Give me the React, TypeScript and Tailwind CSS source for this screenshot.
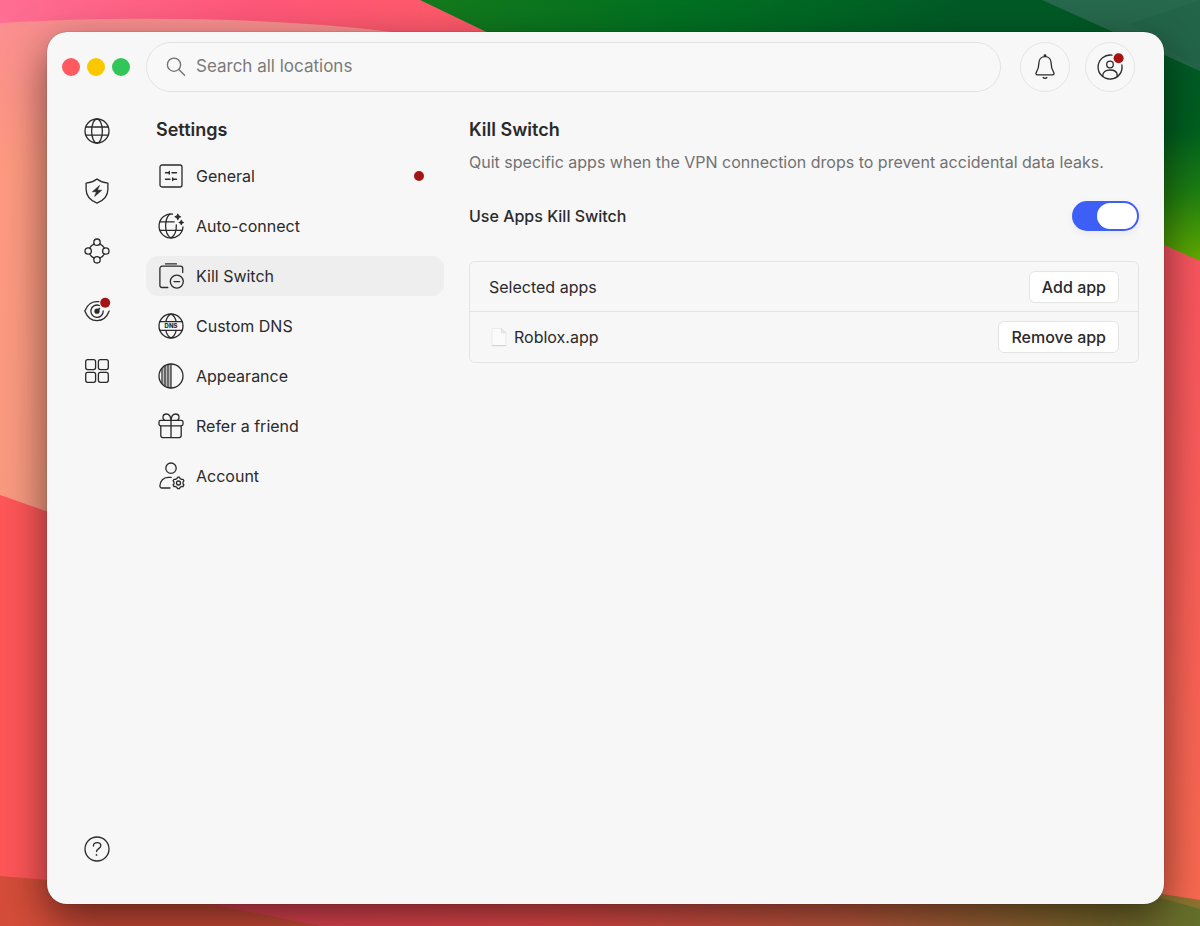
import React, { useState } from "react";

type IconProps = { children: React.ReactNode };

function Icon({ children }: IconProps) {
  return (
    <svg
      viewBox="0 0 26 26"
      className="size-[26px] shrink-0 overflow-visible"
      fill="none"
      stroke="currentColor"
      strokeWidth="1.3"
      strokeLinecap="round"
      strokeLinejoin="round"
      aria-hidden="true"
    >
      {children}
    </svg>
  );
}

const GlobeIcon = () => (
  <Icon>
    <circle cx="13" cy="13" r="12" />
    <ellipse cx="13" cy="13" rx="5.4" ry="12" />
    <path d="M2 9h22M2 17.2h22" />
  </Icon>
);

const ShieldIcon = () => (
  <Icon>
    <path d="M13 .9c3.2 2.500 6.800 3.800 10.900 4.200v6.200c0 6.500-4.200 11.200-10.900 13.800C6.300 22.500 2.100 17.800 2.100 11.300V5.100C6.200 4.700 9.800 3.400 13 .9Z" />
    <path d="M15.300 7.700 8.500 13.700h4l-1.800 4.700 6.900-6.100h-4.100Z" fill="currentColor" stroke="currentColor" strokeWidth=".7" />
  </Icon>
);

const MeshIcon = () => (
  <Icon>
    <circle cx="13" cy="4.200" r="3.200" />
    <circle cx="13" cy="21.800" r="3.200" />
    <circle cx="4.200" cy="13" r="3.200" />
    <circle cx="21.800" cy="13" r="3.200" />
    <path d="M10.200 5.800Q7 7.200 5.700 10.100M15.800 5.800Q19 7.200 20.300 10.100M5.700 15.900Q7 18.800 10.200 20.200M20.300 15.900Q19 18.800 15.800 20.200" />
  </Icon>
);

const EyeIcon = () => (
  <Icon>
    <path d="M14.800 3.700C8.500 2.700 3.300 6.500.8 13c2.600 6.600 7 9.700 12.200 9.700 5.200 0 9.900-3.500 12.200-9.600" />
    <path d="M15.400 7.500A6.200 6.200 0 1 0 19.200 13" />
    <circle cx="13" cy="13.200" r="2.600" fill="currentColor" stroke="none" />
    <path d="m13.500 12.700 2-2.200" strokeWidth="1.600" />
    <circle cx="21.200" cy="4.800" r="5" fill="#a31515" stroke="none" />
  </Icon>
);

const AppsIcon = () => (
  <Icon>
    <rect x="1.700" y="1.700" width="9.900" height="9.900" rx="2" />
    <rect x="14.400" y="1.700" width="9.900" height="9.900" rx="2" />
    <rect x="1.700" y="14.400" width="9.900" height="9.900" rx="2" />
    <rect x="14.400" y="14.400" width="9.900" height="9.900" rx="2" />
  </Icon>
);

const HelpIcon = () => (
  <Icon>
    <circle cx="13" cy="13" r="12" />
    <path d="M9.400 10c0-2.100 1.500-3.300 3.700-3.300s3.700 1.200 3.700 3.100c0 2.900-4.300 2.700-4.300 5.700" />
    <circle cx="12.500" cy="18.900" r=".9" fill="currentColor" stroke="none" />
  </Icon>
);

const SlidersIcon = () => (
  <Icon>
    <rect x="2" y="2" width="22" height="22" rx="2" />
    <path d="M7.500 9.800h3.800M11.300 8.500v2.600M14 9.800h4.500M7.500 16.200h4.500M14.700 14.900v2.600M14.700 16.200h3.800" strokeWidth="1.400" />
  </Icon>
);

const AutoConnectIcon = () => (
  <Icon>
    <path d="M14.500 1.100A12 12 0 1 0 25 14" />
    <path d="M11.500 1.300C9 3.800 7.600 8 7.600 13c0 5.500 2.100 10 5.400 12 3.600-2.200 5.600-7.300 5.300-13.200M2.200 8.800h14M2.200 17.400h21.700" />
    <path d="M19.800 1c.4 1.900.9 2.400 2.800 2.800-1.900.4-2.400.9-2.800 2.800-.4-1.900-.9-2.400-2.800-2.800 1.900-.4 2.400-.9 2.800-2.800ZM23.300 7.300c.3 1.500.7 1.900 2.200 2.200-1.500.3-1.900.7-2.200 2.200-.3-1.500-.7-1.900-2.200-2.200 1.500-.3 1.900-.7 2.200-2.200Z" fill="currentColor" strokeWidth="1.100" />
  </Icon>
);

const KillSwitchIcon = () => (
  <Icon>
    <path d="M7.500.9h11M9.800 24.500H4A2.200 2.200 0 0 1 1.900 22.300V5.400A2.200 2.200 0 0 1 4.100 3.200h18.400a2.200 2.200 0 0 1 2.200 2.200v4" />
    <circle cx="18.800" cy="18.600" r="6.500" />
    <path d="M16 18.600h5.600" />
  </Icon>
);

const DnsIcon = () => (
  <Icon>
    <circle cx="13" cy="13" r="12" />
    <path d="M2 8.600h22M2 17.400h22M7.800 8.600C8.500 5.400 10.200 2.400 13 1c2.800 1.400 4.500 4.400 5.200 7.600M7.800 17.400c.7 3.200 2.400 6.200 5.200 7.600 2.800-1.400 4.500-4.400 5.200-7.600" />
    <text x="13" y="15.100" textAnchor="middle" fontSize="6" fontWeight="800" fill="currentColor" stroke="none">
      DNS
    </text>
  </Icon>
);

const AppearanceIcon = () => (
  <Icon>
    <path d="M5.700 4v18M8.400 2.500v21M11.700 1.500v23" strokeWidth="2.400" strokeLinecap="butt" opacity=".3" />
    <path d="M4 5.500v15M7 2.800v20.400M10 1.600v22.800M13 1v24" strokeWidth="1.200" />
    <circle cx="13" cy="13" r="12" />
  </Icon>
);

const GiftIcon = () => (
  <Icon>
    <rect x="1" y="7.400" width="24" height="5.400" rx="1.700" />
    <path d="M2.800 12.800v9.400a2.500 2.500 0 0 0 2.500 2.500h15.400a2.500 2.500 0 0 0 2.500-2.500v-9.400M13 7.400v17.300" />
    <path d="M13 7.400C12.700 3.500 11.200 1 8.400 1 4.600 1 3.800 5.200 6.600 7.400M13 7.400C13.300 3.500 14.800 1 17.600 1c3.800 0 4.600 4.200 1.800 6.400" />
  </Icon>
);

const AccountIcon = () => (
  <Icon>
    <circle cx="13" cy="5.200" r="5.200" />
    <path d="M12 25H3.800a1.900 1.900 0 0 1-1.900-2.100c.5-5.100 3.600-8.300 8.300-8.500h3" />
    <path d="m19 15.500.6-1.300h1.800l.6 1.300 1.500.9 1.500-.1.900 1.600-.9 1.200v1.700l.9 1.200-.9 1.600-1.500-.1-1.500.9-.6 1.300h-1.800l-.6-1.300-1.500-.9-1.500.1-.9-1.600.9-1.200v-1.700l-.9-1.200.9-1.600 1.500.1Z" />
    <circle cx="20.500" cy="20" r="2" />
  </Icon>
);

const BellIcon = () => (
  <Icon>
    <path d="M13 2.600c-3.700 0-6.100 2.800-6.100 6.500 0 4.500-.7 6.500-2.600 9.200-.8 1.300-.3 2.600 1.200 2.600h15c1.500 0 2-1.300 1.200-2.600-1.900-2.700-2.600-4.700-2.600-9.200 0-3.700-2.400-6.500-6.100-6.500Z" />
    <path d="M11.200 23.500c.8 1.100 2.800 1.100 3.600 0" />
    <circle cx="13" cy="1.700" r="1.400" fill="currentColor" stroke="none" />
  </Icon>
);

const ProfileIcon = () => (
  <Icon>
    <path d="M15 1.200A12 12 0 1 0 24.900 11" />
    <circle cx="13" cy="10.500" r="3.300" />
    <path d="M5.800 22.500v-1.200c0-3.300 2.700-5.300 7.200-5.300s7.200 2 7.200 5.300v1.200" />
    <circle cx="21.600" cy="4.300" r="5" fill="#a31515" stroke="none" />
  </Icon>
);

// Desktop wallpaper behind the window
function Wallpaper() {
  return (
    <svg
      viewBox="0 0 1200 926"
      preserveAspectRatio="none"
      className="absolute inset-0 size-full"
      aria-hidden="true"
    >
      <defs>
        <linearGradient id="pink" x1="0" x2="480" y1="0" y2="0" gradientUnits="userSpaceOnUse">
          <stop offset="0" stopColor="#ff6e93" />
          <stop offset=".5" stopColor="#ff587a" />
          <stop offset="1" stopColor="#ff5a68" />
        </linearGradient>
        <linearGradient id="salmon" x1="0" x2="0" y1="20" y2="510" gradientUnits="userSpaceOnUse">
          <stop offset="0" stopColor="#fb8f90" />
          <stop offset=".3" stopColor="#ff9a80" />
          <stop offset="1" stopColor="#f99a80" />
        </linearGradient>
        <linearGradient id="leaf" x1="420" x2="1200" y1="0" y2="0" gradientUnits="userSpaceOnUse">
          <stop offset="0" stopColor="#147a1c" />
          <stop offset=".35" stopColor="#007022" />
          <stop offset=".7" stopColor="#005a26" />
          <stop offset="1" stopColor="#005a26" />
        </linearGradient>
        <linearGradient id="lime" x1="0" x2="0" y1="60" y2="260" gradientUnits="userSpaceOnUse">
          <stop offset="0" stopColor="#005a26" />
          <stop offset=".35" stopColor="#006020" />
          <stop offset=".65" stopColor="#1c7e12" />
          <stop offset="1" stopColor="#62ac00" />
        </linearGradient>
        <linearGradient id="coral" x1="0" x2="0" y1="244" y2="900" gradientUnits="userSpaceOnUse">
          <stop offset="0" stopColor="#fa5560" />
          <stop offset="1" stopColor="#fa6a50" />
        </linearGradient>
        <linearGradient id="floor" x1="210" x2="1200" y1="0" y2="0" gradientUnits="userSpaceOnUse">
          <stop offset="0" stopColor="#ee4658" />
          <stop offset=".35" stopColor="#f04c4c" />
          <stop offset=".65" stopColor="#c85c40" />
          <stop offset=".85" stopColor="#8f6c30" />
          <stop offset="1" stopColor="#64702a" />
        </linearGradient>
      </defs>
      <rect width="1200" height="926" fill="url(#floor)" />
      <path d="M0 0h520v60H0Z" fill="url(#pink)" />
      <path d="M0 23C130 15 290 18 400 33V600H0Z" fill="url(#salmon)" />
      <path d="M0 495 80 523V890H0Z" fill="#ff5659" />
      <path d="M0 876 60 881 210 904 320 926H0Z" fill="#d44d39" />
      <path d="M420 0h780v270l-80-40V60H545Z" fill="url(#leaf)" />
      <path d="M1100 60h100v220l-100-60Z" fill="url(#lime)" />
      <path d="M1042 0h158v71Z" fill="#27694c" />
      <path d="M1130 24 1200 0v71Z" fill="#226247" opacity=".6" />
      <path d="M1120 225 1200 261V901l-80-10Z" fill="url(#coral)" />
      <path d="M1150 892 1200 900v9l-50-14Z" fill="#8f7430" />
    </svg>
  );
}

const railItems = [
  { label: "Locations", icon: GlobeIcon },
  { label: "Threat Protection", icon: ShieldIcon },
  { label: "Meshnet", icon: MeshIcon },
  { label: "Dark Web Monitor", icon: EyeIcon },
  { label: "Products", icon: AppsIcon },
];

const settingsItems = [
  { id: "general", label: "General", icon: SlidersIcon, alert: true },
  { id: "auto-connect", label: "Auto-connect", icon: AutoConnectIcon },
  { id: "kill-switch", label: "Kill Switch", icon: KillSwitchIcon },
  { id: "custom-dns", label: "Custom DNS", icon: DnsIcon },
  { id: "appearance", label: "Appearance", icon: AppearanceIcon },
  { id: "refer", label: "Refer a friend", icon: GiftIcon },
  { id: "account", label: "Account", icon: AccountIcon },
];

const roundButton =
  "flex size-[50px] shrink-0 items-center justify-center rounded-full border border-[#e5e5e5] bg-[#f8f8f8] cursor-pointer";
const appButton =
  "h-8 rounded-md border border-[#e4e4e4] bg-white px-3 font-medium text-[#2a2a2c] cursor-pointer";

export default function App() {
  const [active, setActive] = useState("kill-switch");
  const [enabled, setEnabled] = useState(true);
  const [apps, setApps] = useState<string[]>(["Roblox.app"]);

  return (
    <div className="relative flex min-h-screen overflow-hidden pt-8 pr-9 pb-[22px] pl-[47px] font-['Inter',sans-serif] text-base text-[#2a2a2c] antialiased">
      <Wallpaper />

      <div className="relative flex min-w-0 flex-1 flex-col rounded-[20px] bg-[#f7f7f7] shadow-[0_0_1px_rgba(0,0,0,0.6),0_16px_44px_rgba(0,0,0,0.55)]">
        {/* Title bar */}
        <header className="flex items-center pt-[10px] pr-[29px]">
          <div className="flex w-[99px] shrink-0 gap-[7px] pl-[15px]">
            <button aria-label="Close" className="size-[18px] rounded-full bg-[#ff5a5f]" />
            <button aria-label="Minimize" className="size-[18px] rounded-full bg-[#fac800]" />
            <button aria-label="Zoom" className="size-[18px] rounded-full bg-[#32c558]" />
          </div>
          <label className="flex h-[50px] min-w-0 flex-1 items-center gap-[10px] rounded-full border border-[#e3e3e3] bg-[#f8f8f8] px-[19px]">
            <svg viewBox="0 0 20 20" className="size-5 shrink-0 text-[#6f6f70]" fill="none" stroke="currentColor" strokeWidth="1.300" strokeLinecap="round" aria-hidden="true">
              <circle cx="8" cy="7.700" r="6.600" />
              <path d="m12.800 12.500 5.800 5.800" />
            </svg>
            <input
              type="search"
              aria-label="Search all locations"
              placeholder="Search all locations"
              className="min-w-0 flex-1 bg-transparent text-[17px] outline-none placeholder:text-[#7a7a7b]"
            />
          </label>
          <div className="ml-[19px] flex gap-[15px]">
            <button aria-label="Notifications" className={roundButton}>
              <BellIcon />
            </button>
            <button aria-label="Profile" className={roundButton}>
              <ProfileIcon />
            </button>
          </div>
        </header>

        <div className="flex flex-1">
          {/* Icon rail */}
          <nav aria-label="Main" className="flex w-[99px] shrink-0 flex-col items-center justify-between pt-[26px] pb-[42px]">
            <div className="flex flex-col gap-[34px]">
              {railItems.map((item) => {
                const RailIcon = item.icon;
                return (
                  <button key={item.label} aria-label={item.label} className="cursor-pointer">
                    <RailIcon />
                  </button>
                );
              })}
            </div>
            <button aria-label="Help" className="cursor-pointer">
              <HelpIcon />
            </button>
          </nav>

          {/* Settings menu */}
          <aside className="w-[298px] shrink-0 pt-6">
            <h2 className="px-[10px] text-lg font-semibold">Settings</h2>
            <div className="mt-3 flex flex-col gap-[10px]">
              {settingsItems.map((item) => {
                const ItemIcon = item.icon;
                return (
                  <button
                    key={item.id}
                    onClick={() => setActive(item.id)}
                    className={`flex h-10 items-center gap-3 rounded-xl pr-5 pl-3 text-left cursor-pointer ${
                      active === item.id ? "bg-[#eeeeee]" : ""
                    }`}
                  >
                    <ItemIcon />
                    <span className="flex-1">{item.label}</span>
                    {item.alert && <span className="size-[10px] rounded-full bg-[#a31515]" />}
                  </button>
                );
              })}
            </div>
          </aside>

          {/* Kill Switch panel */}
          <main className="min-w-0 flex-1 pt-6 pr-[25px] pl-[25px]">
            <h1 className="text-lg font-semibold">Kill Switch</h1>
            <p className="mt-[6px] text-[#717172]">
              Quit specific apps when the VPN connection drops to prevent accidental data leaks.
            </p>

            <div className="mt-[27px] flex items-center justify-between">
              <label htmlFor="apps-kill-switch" className="font-medium">
                Use Apps Kill Switch
              </label>
              <input
                id="apps-kill-switch"
                type="checkbox"
                role="switch"
                checked={enabled}
                onChange={(e) => setEnabled(e.target.checked)}
                className="flex h-[30px] w-[67px] cursor-pointer appearance-none items-center rounded-full bg-gray-300 px-[2px] shadow-[0_3px_8px_rgba(0,0,0,0.06)] before:h-[26px] before:w-10 before:rounded-full before:bg-white before:content-[''] checked:justify-end checked:bg-[#3e5ff6]"
              />
            </div>

            <section className="mt-[30px] divide-y divide-[#e4e4e4] rounded-md border border-[#e4e4e4]">
              <div className="flex h-[50px] items-center justify-between px-[19px]">
                <h3>Selected apps</h3>
                <button className={appButton}>Add app</button>
              </div>
              {apps.map((app) => (
                <div key={app} className="flex h-[50px] items-center justify-between px-[19px]">
                  <span className="flex items-center gap-[5px]">
                    <svg viewBox="0 0 20 20" className="size-5" aria-hidden="true">
                      <path d="M3 1.500h9.500L17 6v12.500H3Z" fill="#fbfbfb" stroke="#e6e6e6" strokeWidth=".8" />
                      <path d="M12.500 1.500V6H17Z" fill="#e9e9e9" stroke="#dadada" strokeWidth=".6" />
                      <path d="M3 18.700h14" stroke="#cccccc" strokeWidth=".9" />
                    </svg>
                    {app}
                  </span>
                  <button className={appButton} onClick={() => setApps(apps.filter((name) => name !== app))}>
                    Remove app
                  </button>
                </div>
              ))}
            </section>
          </main>
        </div>
      </div>
    </div>
  );
}
